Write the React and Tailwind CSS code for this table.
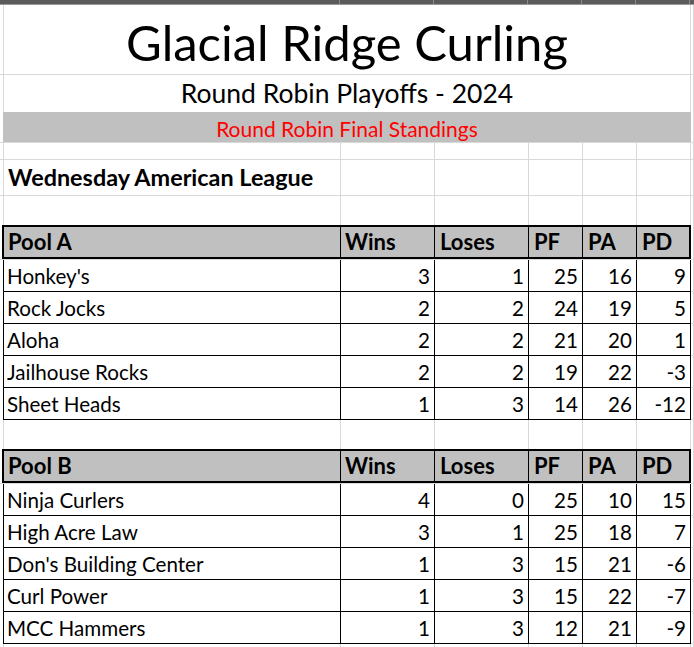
import React from "react";

const poolA = [
  ["Honkey's", 3, 1, 25, 16, 9],
  ["Rock Jocks", 2, 2, 24, 19, 5],
  ["Aloha", 2, 2, 21, 20, 1],
  ["Jailhouse Rocks", 2, 2, 19, 22, -3],
  ["Sheet Heads", 1, 3, 14, 26, -12],
];

const poolB = [
  ["Ninja Curlers", 4, 0, 25, 10, 15],
  ["High Acre Law", 3, 1, 25, 18, 7],
  ["Don's Building Center", 1, 3, 15, 21, -6],
  ["Curl Power", 1, 3, 15, 22, -7],
  ["MCC Hammers", 1, 3, 12, 21, -9],
];

// empty sheet row with light gridlines
function GridRow({ h, bottom = true, children }) {
  return (
    <div className={`flex pl-[3px] ${h} ${bottom ? "border-b border-[#d9d9d9]" : ""}`}>
      <div className="flex border-l border-[#d9d9d9]">
        <div className="w-[337px] border-r border-[#d9d9d9] flex items-end pl-[4px] pb-[6px] whitespace-nowrap">{children}</div>
        <div className="w-[94px] border-r border-[#d9d9d9]" />
        <div className="w-[94px] border-r border-[#d9d9d9]" />
        <div className="w-[54px] border-r border-[#d9d9d9]" />
        <div className="w-[54px] border-r border-[#d9d9d9]" />
        <div className="w-[54px] border-r border-[#d9d9d9]" />
      </div>
      <div className="w-[3px] border-r border-[#d9d9d9]" />
    </div>
  );
}

function PoolHeader({ name }) {
  return (
    <div className="flex pl-[2px] h-[35px] border-b border-[#d9d9d9]">
      <div className="flex border-2 border-black bg-[#c0c0c0] font-bold text-[22px] leading-none">
        <div className="w-[337px] border-r border-black flex items-end pl-[4px] pb-[4px]">{name}</div>
        <div className="w-[94px] border-r border-black flex items-end pl-[4px] pb-[4px]">Wins</div>
        <div className="w-[94px] border-r border-black flex items-end pl-[5px] pb-[4px]">Loses</div>
        <div className="w-[54px] border-r border-black flex items-end pl-[5px] pb-[4px]">PF</div>
        <div className="w-[54px] border-r border-black flex items-end pl-[5px] pb-[4px]">PA</div>
        <div className="w-[52px] flex items-end pl-[5px] pb-[4px]">PD</div>
      </div>
      <div className="w-[3px] border-r border-[#d9d9d9]" />
    </div>
  );
}

function PoolRow({ row }) {
  const [team, wins, loses, pf, pa, pd] = row;
  return (
    <div className="flex pl-[3px] h-[32px] text-[20.6px] leading-none">
      <div className="flex border-l border-b border-black">
        <div className="w-[337px] border-r border-black flex items-end pl-[3px] pb-[4px]">{team}</div>
        <div className="w-[94px] border-r border-black flex items-end justify-end pr-[4px] pb-[4px]">{wins}</div>
        <div className="w-[94px] border-r border-black flex items-end justify-end pr-[4px] pb-[4px]">{loses}</div>
        <div className="w-[54px] border-r border-black flex items-end justify-end pr-[4px] pb-[4px]">{pf}</div>
        <div className="w-[54px] border-r border-black flex items-end justify-end pr-[4px] pb-[4px]">{pa}</div>
        <div className="w-[54px] border-r border-black flex items-end justify-end pr-[4px] pb-[4px]">{pd}</div>
      </div>
      <div className="w-[3px] border-r border-b border-[#d9d9d9]" />
    </div>
  );
}

export default function App() {
  return (
    <div className="w-[694px] h-[647px] overflow-hidden bg-white text-black [font-family:Lato,sans-serif]">
      {/* column header strip */}
      <div className="flex pl-[3px] h-[5px] bg-[#5b5b5b] border-b border-[#9a9a9a]">
        <div className="w-[337px] border-r border-[#8c8c8c]" />
        <div className="w-[94px] border-r border-[#8c8c8c]" />
        <div className="w-[94px] border-r border-[#8c8c8c]" />
        <div className="w-[54px] border-r border-[#8c8c8c]" />
        <div className="w-[54px] border-r border-[#8c8c8c]" />
        <div className="w-[54px] border-r border-[#8c8c8c]" />
      </div>

      {/* title */}
      <div className="flex pl-[3px] h-[70px] border-b border-[#d9d9d9]">
        <div className="w-[688px] border-l border-r border-[#d9d9d9] flex items-end justify-center pb-[7px] text-[49px] leading-none">
          Glacial Ridge Curling
        </div>
        <div className="w-[3px] border-r border-[#d9d9d9]" />
      </div>

      <div className="flex pl-[3px] h-[37px]">
        <div className="w-[688px] border-l border-r border-[#d9d9d9] flex items-end justify-center pb-[6px] text-[26.5px] leading-none">
          Round Robin Playoffs - 2024
        </div>
        <div className="w-[3px] border-r border-[#d9d9d9]" />
      </div>

      <div className="flex pl-[3px] h-[31px] border-b border-[#d9d9d9]">
        <div className="w-[688px] bg-[#c0c0c0] flex items-end justify-center pb-[3px] text-[21px] leading-none text-[#ff0000]">
          Round Robin Final Standings
        </div>
        <div className="w-[3px] border-r border-[#d9d9d9]" />
      </div>

      <GridRow h="h-[17px]" />
      <GridRow h="h-[36px]">
        <span className="font-bold text-[23.4px] leading-none">Wednesday American League</span>
      </GridRow>
      <GridRow h="h-[29px]" bottom={false} />

      <PoolHeader name="Pool A" />
      {poolA.map((r) => (
        <PoolRow key={r[0]} row={r} />
      ))}

      <GridRow h="h-[29px]" bottom={false} />

      <PoolHeader name="Pool B" />
      {poolB.map((r) => (
        <PoolRow key={r[0]} row={r} />
      ))}

      <GridRow h="h-[20px]" />
    </div>
  );
}
